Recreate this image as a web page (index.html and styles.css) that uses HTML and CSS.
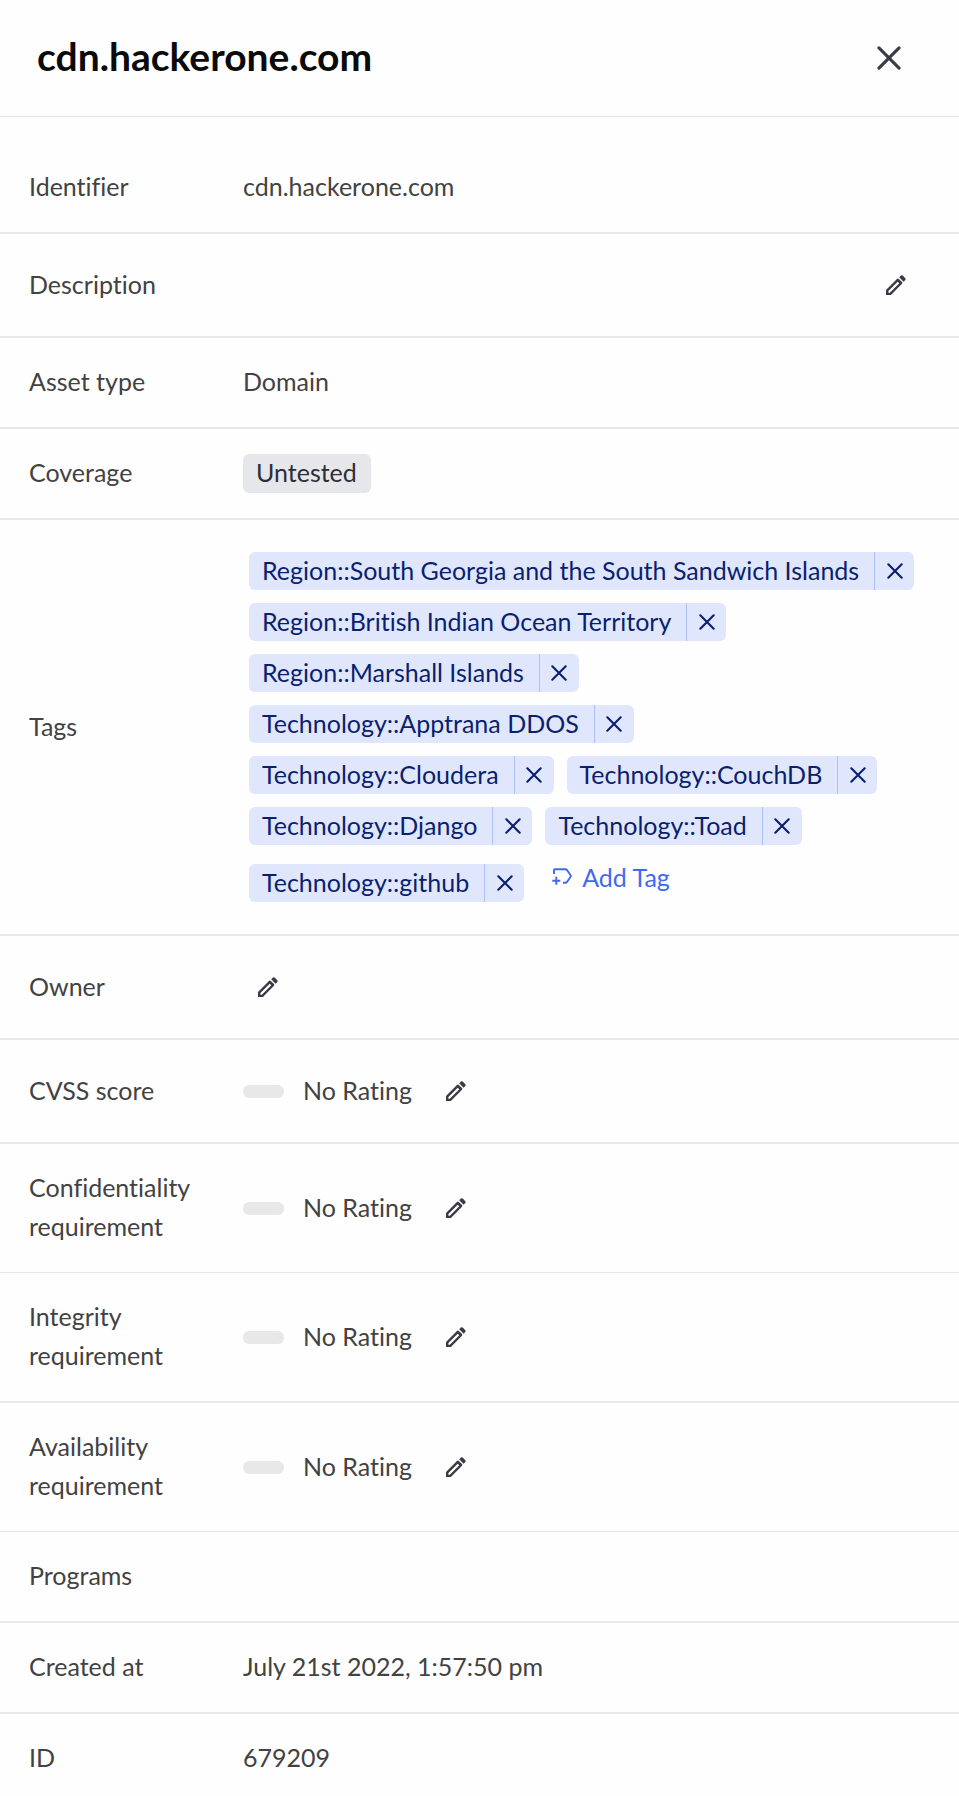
FILE: index.html
```html
<!DOCTYPE html>
<html lang="en">
<head>
<meta charset="utf-8">
<meta name="viewport" content="width=device-width, initial-scale=1">
<title>cdn.hackerone.com</title>
<link rel="stylesheet" href="styles.css">
</head>
<body>
<svg class="sprite" aria-hidden="true">
  <symbol id="cross" viewBox="0 0 16 16"><path d="M1.3 1.3 14.7 14.7M14.7 1.3 1.3 14.7" fill="none" stroke="currentColor" stroke-width="2.1" stroke-linecap="round"/></symbol>
  <symbol id="pencil" viewBox="0 0 20 20">
    <path fill="currentColor" fill-rule="evenodd" d="M0 20V15L11.200 3.800Q12 3.100 12.800 3.900L16 7.100Q16.700 7.900 16 8.700L4.900 20ZM2.400 17.700H3.800L13.300 8.300 11.700 6.700 2.400 16Z"/>
    <path fill="currentColor" d="M13.200 2.300 14.900.6Q15.800-.1 16.700.6L19.300 3.200Q20 4.100 19.300 5L17.600 6.700Z"/>
  </symbol>
  <symbol id="tag-plus" viewBox="0 0 20 18">
    <path d="M2 6V2.200Q2 1.200 3 1.200H13.200Q14.300 1.200 15 2L18.600 7.200Q19.200 8 18.600 8.800L15 14Q14.300 14.800 13.200 14.800H11M4.300 8.700V16.800M.3 12.700H8.300" fill="none" stroke="currentColor" stroke-width="1.900"/>
  </symbol>
</svg>
<main class="panel">
  <header class="panel-header">
    <h1 class="title">cdn.hackerone.com</h1>
    <button class="icon-button close" type="button" aria-label="Close"><svg class="close-icon"><use href="#cross"/></svg></button>
  </header>
  <dl class="details">
    <div class="row"><dt>Identifier</dt><dd class="text">cdn.hackerone.com</dd></div>
    <div class="row tall"><dt>Description</dt><dd class="end"><button class="icon-button" type="button" aria-label="Edit description"><svg class="pencil"><use href="#pencil"/></svg></button></dd></div>
    <div class="row"><dt>Asset type</dt><dd class="text">Domain</dd></div>
    <div class="row"><dt>Coverage</dt><dd><span class="badge">Untested</span></dd></div>
    <div class="row"><dt>Tags</dt>
      <dd class="tags">
        <span class="tag"><span class="tag-name">Region::South Georgia and the South Sandwich Islands</span><button class="tag-remove" type="button" aria-label="Remove South Georgia and the South Sandwich Islands"><svg><use href="#cross"/></svg></button></span>
        <span class="tag"><span class="tag-name">Region::British Indian Ocean Territory</span><button class="tag-remove" type="button" aria-label="Remove British Indian Ocean Territory"><svg><use href="#cross"/></svg></button></span>
        <span class="tag"><span class="tag-name">Region::Marshall Islands</span><button class="tag-remove" type="button" aria-label="Remove Marshall Islands"><svg><use href="#cross"/></svg></button></span>
        <span class="tag"><span class="tag-name">Technology::Apptrana DDOS</span><button class="tag-remove" type="button" aria-label="Remove Apptrana DDOS"><svg><use href="#cross"/></svg></button></span>
        <span class="tag"><span class="tag-name">Technology::Cloudera</span><button class="tag-remove" type="button" aria-label="Remove Cloudera"><svg><use href="#cross"/></svg></button></span>
        <span class="tag"><span class="tag-name">Technology::CouchDB</span><button class="tag-remove" type="button" aria-label="Remove CouchDB"><svg><use href="#cross"/></svg></button></span>
        <span class="tag"><span class="tag-name">Technology::Django</span><button class="tag-remove" type="button" aria-label="Remove Django"><svg><use href="#cross"/></svg></button></span>
        <span class="tag"><span class="tag-name">Technology::Toad</span><button class="tag-remove" type="button" aria-label="Remove Toad"><svg><use href="#cross"/></svg></button></span>
        <span class="tag"><span class="tag-name">Technology::github</span><button class="tag-remove" type="button" aria-label="Remove github"><svg><use href="#cross"/></svg></button></span>
        <button class="add-tag" type="button"><svg><use href="#tag-plus"/></svg>Add Tag</button>
      </dd>
    </div>
    <div class="row tall"><dt>Owner</dt><dd><button class="icon-button" type="button" aria-label="Edit owner"><svg class="pencil"><use href="#pencil"/></svg></button></dd></div>
    <div class="row tall"><dt>CVSS score</dt><dd><span class="meter"></span><span class="rating">No Rating</span><button class="icon-button" type="button" aria-label="Edit CVSS score"><svg class="pencil"><use href="#pencil"/></svg></button></dd></div>
    <div class="row thin"><dt>Confidentiality requirement</dt><dd><span class="meter"></span><span class="rating">No Rating</span><button class="icon-button" type="button" aria-label="Edit confidentiality requirement"><svg class="pencil"><use href="#pencil"/></svg></button></dd></div>
    <div class="row"><dt>Integrity requirement</dt><dd><span class="meter"></span><span class="rating">No Rating</span><button class="icon-button" type="button" aria-label="Edit integrity requirement"><svg class="pencil"><use href="#pencil"/></svg></button></dd></div>
    <div class="row thin"><dt>Availability requirement</dt><dd><span class="meter"></span><span class="rating">No Rating</span><button class="icon-button" type="button" aria-label="Edit availability requirement"><svg class="pencil"><use href="#pencil"/></svg></button></dd></div>
    <div class="row"><dt>Programs</dt><dd></dd></div>
    <div class="row"><dt>Created at</dt><dd class="text">July 21st 2022, 1:57:50 pm</dd></div>
    <div class="row last"><dt>ID</dt><dd class="text">679209</dd></div>
  </dl>
</main>
</body>
</html>
```
FILE: styles.css
```css
* { box-sizing: border-box; }
body {
  margin: 0;
  background: #fefefe;
  color: #424242;
  font: 25px/39px Lato, "Open Sans", sans-serif;
  font-variant-ligatures: no-common-ligatures;
}
button {
  margin: 0;
  border: 0;
  padding: 0;
  background: none;
  color: inherit;
  font: inherit;
  font-variant-ligatures: inherit;
  cursor: pointer;
}
svg { display: block; }
.sprite { position: absolute; width: 0; height: 0; }

.panel-header {
  display: flex;
  align-items: center;
  justify-content: space-between;
  height: 117px;
  padding: 0 45px 0 37px;
  border-bottom: 1px solid #e4e5eb;
}
.title {
  margin: 0;
  padding-bottom: 4px;
  color: #0a0a0a;
  font-size: 39px;
  line-height: 48px;
  font-weight: 700;
}

.icon-button {
  display: flex;
  align-items: center;
  justify-content: center;
  width: 50px;
  height: 52px;
  color: #3b3b48;
}
.close-icon { width: 24px; height: 24px; }
.pencil { width: 20px; height: 20px; overflow: visible; }

.details { margin: 0; padding-top: 26px; }
.row {
  display: grid;
  grid-template-columns: 214px 1fr;
  align-items: center;
  padding: 24px 29px;
  border-bottom: 2px solid #e8e8e8;
}
.tall { min-height: 104px; }
.thin { border-bottom-width: 1px; }
.last { border-bottom: 0; }
dt { padding: 0 24px 2px 0; }
dd { display: flex; align-items: center; margin: 0; }
.text { padding-bottom: 2px; }
.end { justify-content: flex-end; margin-right: 9px; }

.badge {
  padding: 0 14px 2px 13px;
  border-radius: 6px;
  background: #e6e7eb;
  color: #2d2e36;
  line-height: 37px;
}

.tags {
  flex-wrap: wrap;
  align-items: flex-end;
  gap: 13px;
  padding: 8px 0 8px 6px;
}
.tag {
  display: flex;
  height: 38px;
  border-radius: 6px;
  background: #e0e7fd;
  color: #0a1f70;
  line-height: 36px;
  white-space: nowrap;
}
.tag-name { padding: 0 15px 0 13px; }
.tag-remove {
  display: flex;
  align-items: center;
  justify-content: center;
  width: 40px;
  border-left: 1px solid #adc0fa;
}
.tag-remove svg { width: 16px; height: 16px; }
.add-tag {
  display: flex;
  align-items: center;
  gap: 10px;
  height: 38px;
  margin: 0 0 6px 15px;
  color: #4169f0;
}
.add-tag svg { width: 20px; height: 18px; }

.meter { width: 41px; height: 13px; border-radius: 6px; background: #e8e8e8; }
.rating { margin: 0 19px; padding-bottom: 2px; }
```
